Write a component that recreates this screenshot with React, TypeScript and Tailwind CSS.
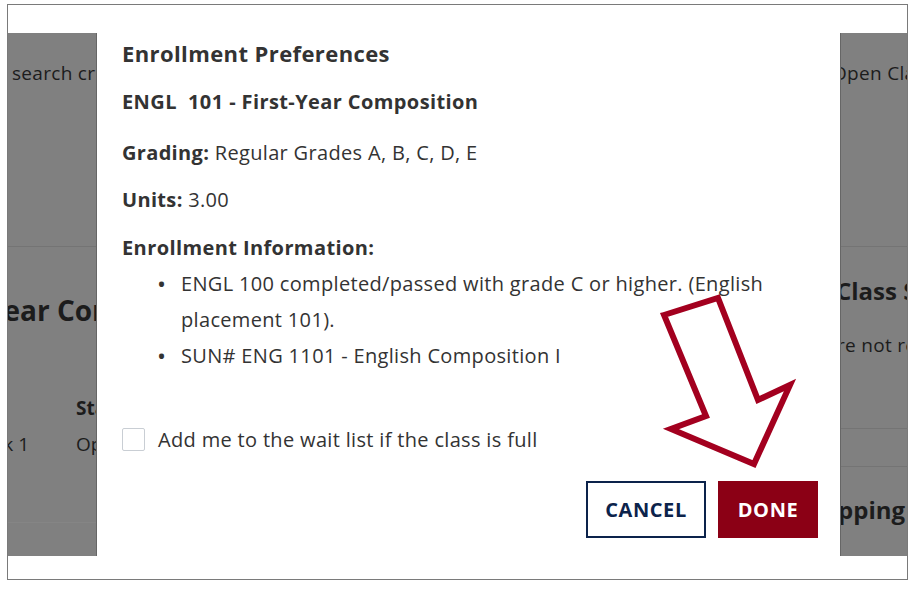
import React from "react";

const font = { fontFamily: '"Open Sans", "Noto Sans", sans-serif' };

const LeftBackdrop: React.FC = () => (
  <div className="flex w-[89px] flex-col overflow-hidden">
    <div className="h-[28px] bg-white" />
    <div className="flex h-[523px] flex-col overflow-hidden border-r border-[#666] bg-[#808080] text-[#1c1c1c]">
      <div className="mt-[28px] flex h-[24px] items-center whitespace-nowrap pl-[4px] text-[19px] tracking-[0.3px]">search criteria</div>
      <div className="mt-[161px] h-px bg-[#747474]" />
      <div className="mt-[45px] flex h-[36px] items-center whitespace-nowrap -ml-[22px] text-[28px] font-bold">Year Composition</div>
      <div className="mt-[68px] flex h-[24px] items-center whitespace-nowrap pl-[68px] text-[19px] font-bold">Status</div>
      <div className="mt-[12px] flex h-[24px] items-center whitespace-nowrap text-[19px]">
        <div className="flex w-[21px] justify-end">Lek&nbsp;1</div>
        <div className="pl-[47px]">Open</div>
      </div>
      <div className="mt-[66px] h-px bg-[#858585]" />
    </div>
    <div className="flex-1 bg-white" />
  </div>
);

const RightBackdrop: React.FC = () => (
  <div className="flex w-[67px] flex-col overflow-hidden">
    <div className="h-[28px] bg-white" />
    <div className="flex h-[523px] flex-col overflow-hidden border-l border-[#666] bg-[#808080] text-[#1c1c1c]">
      <div className="mt-[28px] flex h-[24px] items-center whitespace-nowrap -ml-[9px] text-[19px] tracking-[0.3px]">Open Classes</div>
      <div className="mt-[161px] h-px bg-[#747474]" />
      <div className="mt-[28px] flex h-[32px] items-center whitespace-nowrap -ml-[5px] text-[24px] font-bold">Class Search</div>
      <div className="mt-[26px] flex h-[24px] items-center whitespace-nowrap -ml-[4px] text-[19px] tracking-[0.3px]">re not returned</div>
      <div className="mt-[71px] h-px bg-[#747474]" />
      <div className="mt-[37px] h-px bg-[#747474]" />
      <div className="mt-[27px] flex h-[32px] items-center whitespace-nowrap -ml-[3px] text-[24px] font-bold">pping Cart</div>
    </div>
    <div className="flex-1 bg-white" />
  </div>
);

const Arrow: React.FC = () => (
  <svg className="pointer-events-none absolute left-0 top-0" width="743" height="574" viewBox="0 0 743 574">
    <polygon
      points="567,310 621,293 661,395 693,380 657,459 574,424 609,411"
      fill="none"
      stroke="#a3001f"
      strokeWidth="6"
      strokeLinejoin="miter"
    />
  </svg>
);

export default function App() {
  return (
    <div className="h-[589px] w-[915px] bg-white pl-[7px] pt-[4px]" style={font}>
      <div className="flex h-[576px] w-[901px] border border-[#7a7a7a] bg-white">
        <LeftBackdrop />
        <div className="relative w-[743px] bg-white pl-[25px] text-[#333]">
          <div className="mt-[34px] text-[22px] font-bold leading-[28px] tracking-[0.4px]">Enrollment Preferences</div>
          <div className="mt-[21px] text-[20px] font-bold leading-[28px] tracking-[0.4px]">ENGL&nbsp; 101 - First-Year Composition</div>
          <div className="mt-[23px] text-[20px] leading-[28px] tracking-[0.33px]">
            <span className="font-bold">Grading:</span> Regular Grades A, B, C, D, E
          </div>
          <div className="mt-[19px] text-[20px] leading-[28px] tracking-[0.33px]">
            <span className="font-bold">Units:</span> 3.00
          </div>
          <div className="mt-[20px] text-[20px] font-bold leading-[28px] tracking-[0.4px]">Enrollment Information:</div>
          <ul className="mt-[4px] w-[660px] text-[20px] leading-[36px] tracking-[0.33px]">
            <li className="flex">
              <span className="w-[59px] shrink-0 pl-[35px] text-[24px]">•</span>
              <span>ENGL 100 completed/passed with grade C or higher. (English placement 101).</span>
            </li>
            <li className="flex">
              <span className="w-[59px] shrink-0 pl-[35px] text-[24px]">•</span>
              <span>SUN# ENG 1101 - English Composition I</span>
            </li>
          </ul>
          <label className="mt-[54px] flex h-[23px] items-center gap-[13px] text-[20px] tracking-[0.33px]">
            <span className="h-[23px] w-[23px] rounded-[2px] border-[1.5px] border-[#c9ced4] bg-white" />
            <span>Add me to the wait list if the class is full</span>
          </label>
          <div className="mt-[30px] flex justify-end gap-[12px] pr-[22px]">
            <button className="h-[57px] w-[120px] border-2 border-[#0c234b] bg-white text-[20px] font-bold tracking-[0.6px] text-[#0c234b]">
              CANCEL
            </button>
            <button className="h-[57px] w-[100px] bg-[#8b0015] text-[20px] font-bold tracking-[0.6px] text-white">
              DONE
            </button>
          </div>
          <Arrow />
        </div>
        <RightBackdrop />
      </div>
    </div>
  );
}
